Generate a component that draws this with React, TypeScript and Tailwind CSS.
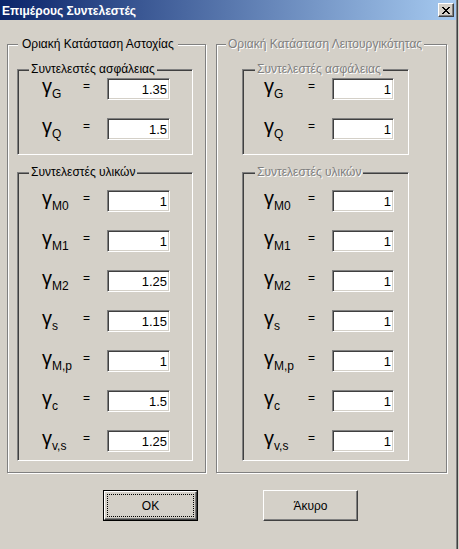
import React from 'react'

// ── Data ──────────────────────────────────────────────────────

interface Factor {
  sub: string
  uls: string
  sls: string
}

const safety: Factor[] = [
  { sub: 'G', uls: '1.35', sls: '1' },
  { sub: 'Q', uls: '1.5', sls: '1' },
]

const materials: Factor[] = [
  { sub: 'M0', uls: '1', sls: '1' },
  { sub: 'M1', uls: '1', sls: '1' },
  { sub: 'M2', uls: '1.25', sls: '1' },
  { sub: 's', uls: '1.15', sls: '1' },
  { sub: 'M,p', uls: '1', sls: '1' },
  { sub: 'c', uls: '1.5', sls: '1' },
  { sub: 'v,s', uls: '1.25', sls: '1' },
]

// ── Pieces ────────────────────────────────────────────────────

// classic sunken edit box
function Field({ value, width }: { value: string; width: string }) {
  return (
    <div
      className={`${width} h-[22px] bg-white border border-t-[#808080] border-l-[#808080] border-r-white border-b-white shadow-[inset_1px_1px_0_#404040,inset_-1px_-1px_0_#d4d0c8] flex items-center justify-end pr-[2px] text-[13px] leading-none text-black`}
    >
      {value}
    </div>
  )
}

function Row({ f, right, first }: { f: Factor; right?: boolean; first: string }) {
  return (
    <div className={`flex h-[22px] ${first} ${right ? 'pl-[21px]' : 'pl-[24px]'}`}>
      <div className={`${right ? 'w-[44px]' : 'w-[41px]'} h-[22px] pt-[1px] text-[20px] leading-[14px] whitespace-nowrap text-black`}>
        γ<span className="text-[12px] align-[-5px]">{f.sub}</span>
      </div>
      <div className="w-[24px] pt-[2px] text-[12px] leading-[12px] text-black">=</div>
      <Field value={right ? f.sls : f.uls} width={right ? 'w-[62px]' : 'w-[63px]'} />
    </div>
  )
}

function InnerGroup({
  title,
  items,
  right,
  disabled,
  className,
}: {
  title: string
  items: Factor[]
  right?: boolean
  disabled?: boolean
  className: string
}) {
  return (
    <div
      className={`${className} border border-t-[#808080] border-l-[#808080] border-r-white border-b-white shadow-[inset_1px_1px_0_#404040,inset_-1px_-1px_0_#d4d0c8]`}
    >
      <div
        className={`-mt-[8px] h-[15px] w-fit px-[2px] bg-[#d4d0c8] text-[12px] leading-[15px] whitespace-nowrap ${right ? 'ml-[12px]' : 'ml-[11px]'} ${disabled ? 'text-[#808080] [text-shadow:1px_1px_0_#fff]' : 'text-black'}`}
      >
        {title}
      </div>
      {items.map((f, i) => (
        <Row key={f.sub} f={f} right={right} first={i === 0 ? '' : 'mt-[18px]'} />
      ))}
    </div>
  )
}

function Panel({ title, right }: { title: string; right?: boolean }) {
  return (
    <div
      className={`${right ? 'w-[231px]' : 'w-[199px]'} border border-[#808080] shadow-[inset_1px_1px_0_#fff,1px_1px_0_#fff] pb-[11px]`}
    >
      <div
        className={`-mt-[8px] h-[15px] w-fit bg-[#d4d0c8] text-[12px] leading-[15px] whitespace-nowrap ${right ? 'ml-[9px] px-[2px] text-[#808080] [text-shadow:1px_1px_0_#fff]' : 'ml-[10px] px-[4px] text-black'}`}
      >
        {title}
      </div>
      <InnerGroup
        title="Συντελεστές ασφάλειας"
        items={safety}
        right={right}
        disabled={right}
        className={`mt-[17px] pb-[14px] [&>div:nth-child(2)]:mt-[1px] ${right ? 'ml-[25px] w-[167px]' : 'ml-[9px] w-[176px]'}`}
      />
      <InnerGroup
        title="Συντελεστές υλικών"
        items={materials}
        right={right}
        disabled={right}
        className={`mt-[17px] pb-[8px] [&>div:nth-child(2)]:mt-[10px] ${right ? 'ml-[25px] w-[167px]' : 'ml-[9px] w-[176px]'}`}
      />
    </div>
  )
}

// ── App ───────────────────────────────────────────────────────

export default function App() {
  return (
    <div className="w-[459px] h-[549px] bg-[#d4d0c8] flex overflow-hidden font-['Liberation_Sans',Arial,sans-serif]">
      <div className="w-[456px] flex flex-col">
        {/* Title bar */}
        <div className="h-[20px] flex items-start justify-between bg-[linear-gradient(to_right,#0a246a,#a6caf0)]">
          <span className="pl-[2px] text-[12px] leading-[22px] font-bold text-white whitespace-nowrap">
            Επιμέρους Συντελεστές
          </span>
          <div className="mt-[3px] mr-[2px] w-[16px] h-[14px] bg-[#d4d0c8] border border-t-white border-l-white border-r-[#404040] border-b-[#404040] shadow-[inset_-1px_-1px_0_#808080] flex items-center justify-center">
            <svg width="8" height="7" viewBox="0 0 8 7" shapeRendering="crispEdges">
              <path
                d="M0 0h2v1h-2zM6 0h2v1h-2zM1 1h2v1h-2zM5 1h2v1h-2zM2 2h4v1h-4zM3 3h2v1h-2zM2 4h4v1h-4zM1 5h2v1h-2zM5 5h2v1h-2zM0 6h2v1h-2zM6 6h2v1h-2z"
                fill="#000"
              />
            </svg>
          </div>
        </div>

        {/* Panels */}
        <div className="flex mt-[24px] pl-[7px] gap-[10px]">
          <Panel title="Οριακή Κατάσταση Αστοχίας" />
          <Panel title="Οριακή Κατάσταση Λειτουργικότητας" right />
        </div>

        {/* Buttons */}
        <div className="flex mt-[17px] pl-[103px] gap-[65px] text-[12px] text-black">
          <div className="w-[95px] h-[31px] border border-black">
            <div className="h-full border border-t-white border-l-white border-r-[#404040] border-b-[#404040] shadow-[inset_-1px_-1px_0_#808080] p-[2px]">
              <div className="h-full border border-dotted border-black flex items-center justify-center">OK</div>
            </div>
          </div>
          <div className="w-[95px] h-[31px] border border-t-white border-l-white border-r-[#404040] border-b-[#404040] shadow-[inset_-1px_-1px_0_#808080] flex items-center justify-center">
            Άκυρο
          </div>
        </div>
      </div>
      <div className="w-px bg-[#808080]" />
      <div className="w-px bg-[#404040]" />
      <div className="w-px bg-[#d4d0c8]" />
    </div>
  )
}
